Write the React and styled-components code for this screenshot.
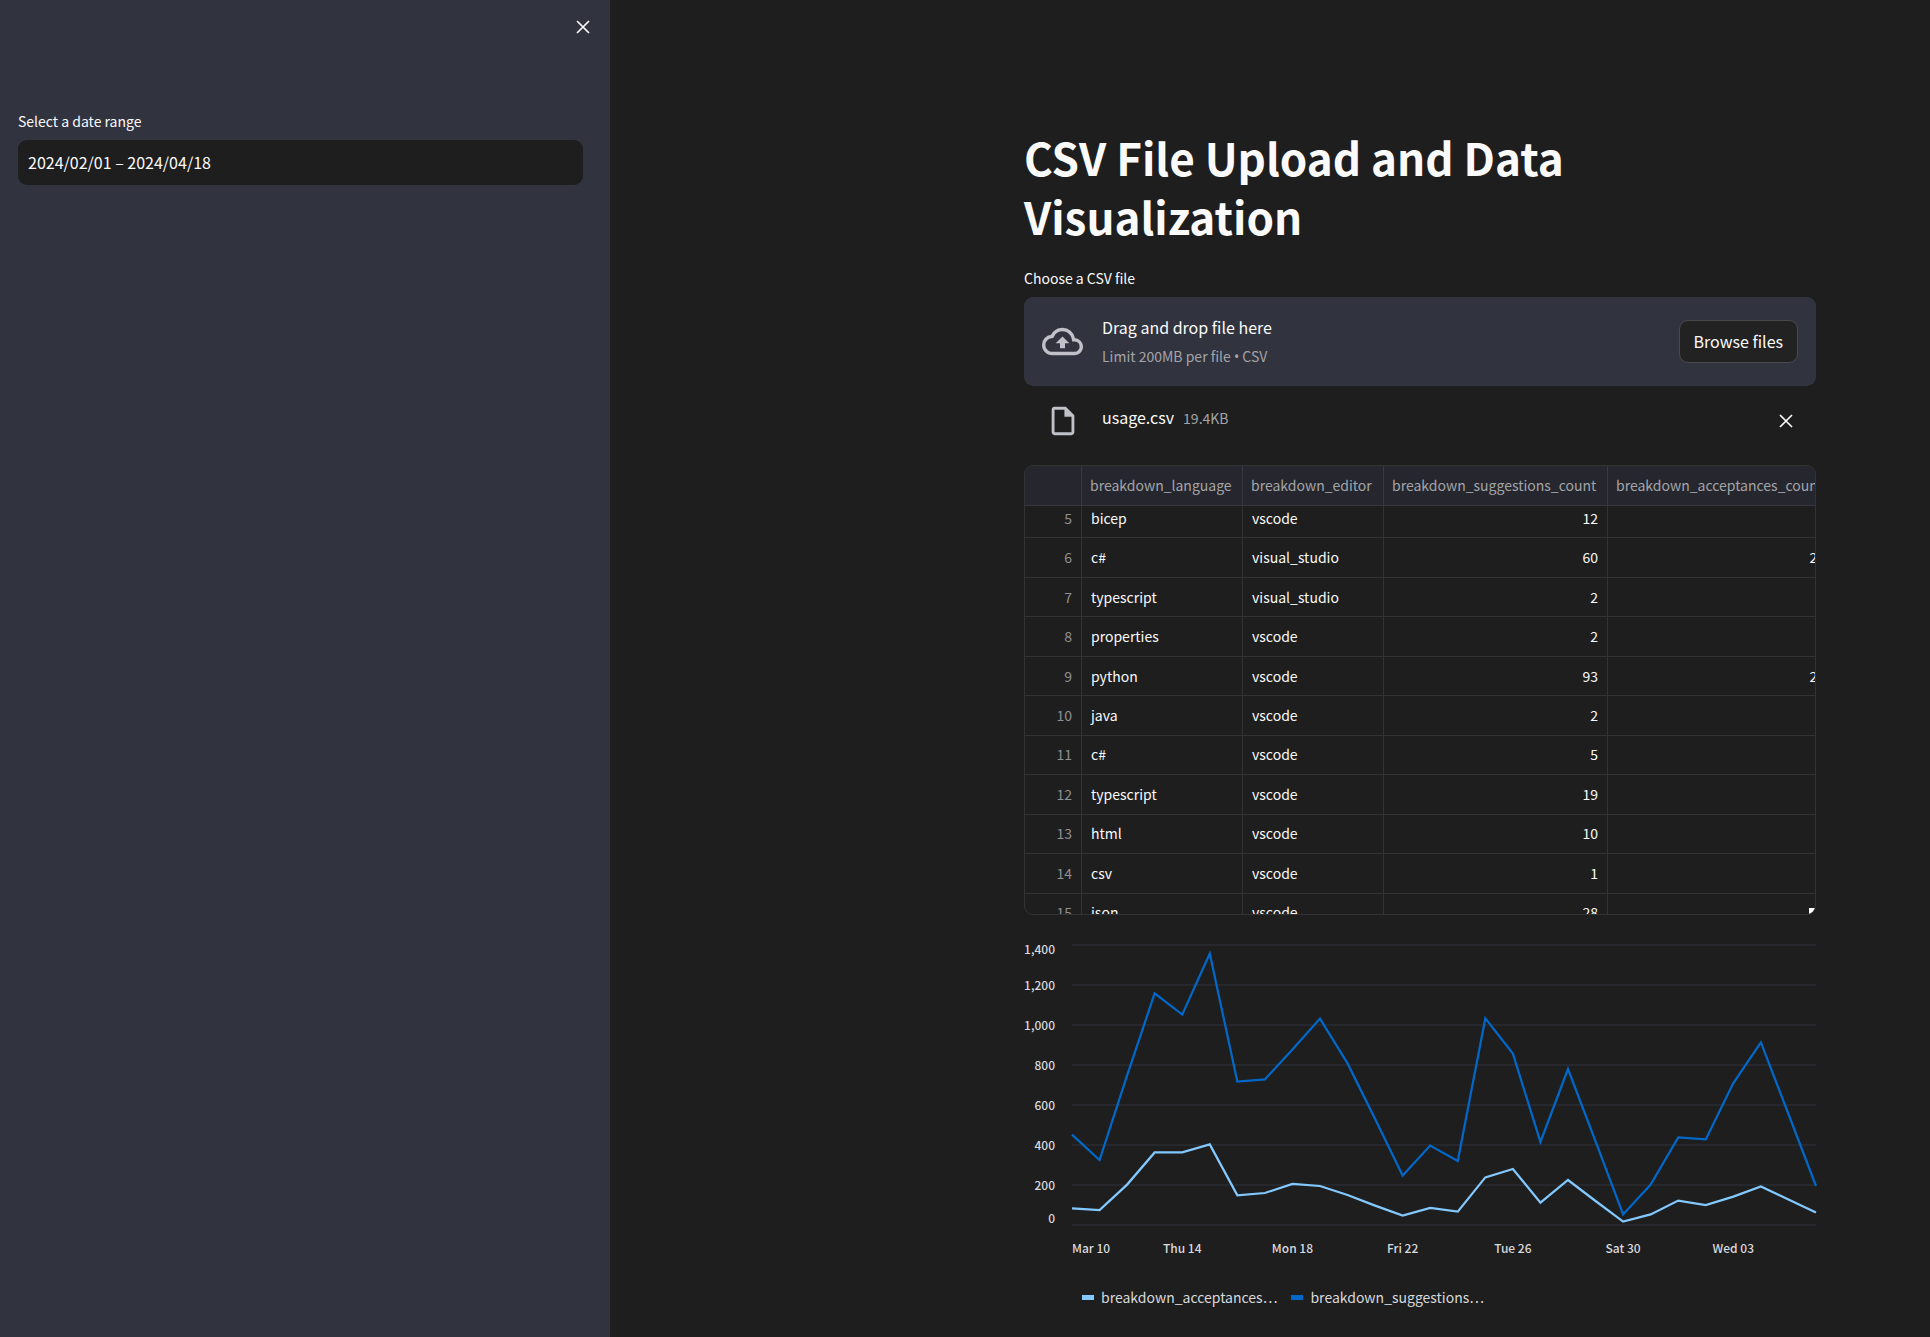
import React, { useLayoutEffect, useRef } from "react";
import styled, { createGlobalStyle } from "styled-components";

const GlobalStyle = createGlobalStyle`
  *, *::before, *::after { box-sizing: border-box; }
  body {
    margin: 0;
    background: #1e1e1e;
    color: #fafafa;
    font-family: "Noto Sans CJK SC", "Noto Sans", sans-serif;
    font-size: 16px;
    line-height: 24px;
  }
`;

const Page = styled.div`
  display: flex;
  min-height: 100vh;
`;

const Sidebar = styled.aside`
  flex: 0 0 610px;
  padding: 12px 27px 24px 18px;
  background: #31333f;
`;

const SidebarTop = styled.div`
  display: flex;
  justify-content: flex-end;
  height: 97px;
  margin-right: -15px;
`;

const IconButton = styled.button`
  display: flex;
  align-items: center;
  justify-content: center;
  width: 30px;
  height: 30px;
  padding: 0;
  border: 0;
  background: none;
  color: #fafafa;
  cursor: pointer;
`;

const Label = styled.label`
  display: block;
  margin-bottom: 7px;
  font-size: 14px;
  line-height: 24px;
`;

const DateInput = styled.input`
  display: block;
  width: 100%;
  height: 45px;
  padding: 0 10px 2px;
  border: 0;
  border-radius: 9px;
  background: #1e1e1e;
  color: #fafafa;
  font: inherit;
  outline: none;
`;

const Main = styled.main`
  flex: 1;
  min-width: 0;
  padding: 128px 0 24px 300px;
  display: flex;
  justify-content: center;
`;

const Content = styled.div`
  width: 100%;
  max-width: 792px;
`;

const Title = styled.h1`
  margin: 0 0 20px;
  font-size: 44px;
  font-weight: 700;
  line-height: 59px;
`;

const Dropzone = styled.section`
  display: flex;
  align-items: center;
  height: 89px;
  padding: 0 18px;
  border-radius: 9px;
  background: #31333f;
`;

const IconSlot = styled.span`
  display: flex;
  justify-content: center;
  width: 41px;
  margin-right: 19px;
  color: #c0c1c9;
`;

const DropText = styled.div`
  flex: 1;
  display: flex;
  flex-direction: column;
  gap: 5px;
`;

const Muted = styled.small`
  color: #a3a4a9;
  font-size: 14px;
`;

const Bullet = styled.span`
  font-family: "Noto Sans", sans-serif;
`;

const BrowseButton = styled.button`
  height: 43px;
  padding: 0 14px 2px;
  border: 1px solid #4a4a4c;
  border-radius: 9px;
  background: #222222;
  color: #fafafa;
  font: inherit;
  cursor: pointer;
`;

const FileRow = styled.div`
  display: flex;
  align-items: center;
  height: 70px;
  margin-bottom: 9px;
  padding: 0 15px 0 18px;
`;

const FileName = styled.div`
  flex: 1;
  display: flex;
  align-items: baseline;
  gap: 9px;
  padding-bottom: 7px;
`;

const GridFrame = styled.div`
  position: relative;
  overflow: hidden;
  border: 1px solid #333336;
  border-radius: 9px;
`;

const GridScroller = styled.div`
  height: 448px;
  overflow: hidden;
`;

const ScrollCorner = styled.span`
  position: absolute;
  right: 0;
  bottom: 0;
  width: 6px;
  height: 6px;
  background: #ffffff;
`;

const Grid = styled.table`
  width: 810px;
  height: 474px;
  table-layout: fixed;
  border-collapse: separate;
  border-spacing: 0;
  font-size: 14px;
  line-height: 20px;
`;

const HeadCell = styled.th`
  position: sticky;
  top: 0;
  height: 40px;
  padding: 0 8px 2px;
  border-right: 1px solid #38393e;
  border-bottom: 1px solid #38393e;
  background: #26272e;
  color: #a3a4a8;
  font-weight: 400;
  text-align: left;
  white-space: nowrap;
`;

const Cell = styled.td`
  padding: 0 9px 1px;
  border-right: 1px solid #333336;
  border-bottom: 1px solid #333336;
  color: ${(p) => (p.$muted ? "#8f9093" : "#fafafa")};
  text-align: ${(p) => (p.$right ? "right" : "left")};
`;

const ChartSvg = styled.svg`
  display: block;
  width: 100%;
  height: auto;
  margin-top: 20px;
  overflow: visible;
`;

const AxisText = styled.text`
  fill: #d8d9dd;
  font-size: 12px;
  font-weight: 500;
`;

const Legend = styled.ul`
  display: flex;
  gap: 14px;
  margin: 20px 0 0;
  padding: 0 0 0 58px;
  list-style: none;
  color: #d8d9dd;
  font-size: 14px;
`;

const LegendItem = styled.li`
  display: flex;
  align-items: center;
  gap: 7px;

  &::before {
    content: "";
    width: 12px;
    height: 5px;
    background: ${(p) => p.$color};
  }
`;

const columns = [
  { name: "", width: 57 },
  { name: "breakdown_language", width: 161 },
  { name: "breakdown_editor", width: 141 },
  { name: "breakdown_suggestions_count", width: 224 },
  { name: "breakdown_acceptances_count", width: 227 },
];

const rows = [
  [5, "bicep", "vscode", 12, ""],
  [6, "c#", "visual_studio", 60, 20],
  [7, "typescript", "visual_studio", 2, ""],
  [8, "properties", "vscode", 2, ""],
  [9, "python", "vscode", 93, 20],
  [10, "java", "vscode", 2, ""],
  [11, "c#", "vscode", 5, ""],
  [12, "typescript", "vscode", 19, ""],
  [13, "html", "vscode", 10, ""],
  [14, "csv", "vscode", 1, ""],
  [15, "json", "vscode", 28, ""],
];

const suggestions = [
  452, 325, 748, 1158, 1052, 1357, 717, 728, 878, 1032, 808, 530, 247, 397, 320,
  1033, 857, 415, 780, 418, 53, 202, 438, 428, 710, 913, 555, 195,
];
const acceptances = [
  83, 75, 202, 363, 363, 403, 148, 160, 205, 195, 150, 97, 47, 85, 67, 238, 280,
  112, 225, 120, 17, 53, 122, 100, 142, 193, 128, 63,
];

const LIGHT = "#83c9ff";
const BLUE = "#0068c9";

const plot = { left: 48, right: 792, top: 10, bottom: 290 };
const xAt = (day) => plot.left + ((plot.right - plot.left) * day) / 27;
const yAt = (value) => plot.bottom - ((plot.bottom - plot.top) * value) / 1400;
const toPoints = (series) => series.map((v, i) => `${xAt(i)},${yAt(v)}`).join(" ");

const yTicks = [0, 200, 400, 600, 800, 1000, 1200, 1400];
const xTicks = [
  [0, "Mar 10"],
  [4, "Thu 14"],
  [8, "Mon 18"],
  [12, "Fri 22"],
  [16, "Tue 26"],
  [20, "Sat 30"],
  [24, "Wed 03"],
];

// The first and last labels are pulled inside the plot's height.
const yLabelAt = (value) => {
  if (value === 0) return yAt(0) - 2;
  if (value === 1400) return yAt(1400) + 9;
  return yAt(value) + 5;
};

function CloseIcon() {
  return (
    <svg width="14" height="14" viewBox="0 0 14 14" fill="none" stroke="currentColor" strokeWidth="1.7" aria-hidden="true">
      <path d="M1 1l12 12M13 1L1 13" />
    </svg>
  );
}

function CloudUploadIcon() {
  return (
    <svg width="41" height="41" viewBox="0 0 24 24" fill="currentColor" aria-hidden="true">
      <path d="M19.35 10.04A7.49 7.49 0 0 0 12 4C9.11 4 6.6 5.64 5.35 8.04A5.994 5.994 0 0 0 0 14c0 3.31 2.69 6 6 6h13c2.76 0 5-2.24 5-5 0-2.64-2.05-4.78-4.65-4.96zM19 18H6c-2.21 0-4-1.79-4-4 0-2.05 1.53-3.76 3.56-3.97l1.07-.11.5-.95A5.469 5.469 0 0 1 12 6c2.62 0 4.88 1.86 5.39 4.43l.3 1.5 1.53.11A2.98 2.98 0 0 1 22 15c0 1.65-1.35 3-3 3zM8 13h2.55v3h2.9v-3H16l-4-4z" />
    </svg>
  );
}

function FileIcon() {
  return (
    <svg width="34" height="34" viewBox="0 0 24 24" fill="currentColor" aria-hidden="true">
      <path d="M6 2c-1.1 0-1.99.9-1.99 2L4 20c0 1.1.89 2 1.99 2H18c1.1 0 2-.9 2-2V8l-6-6H6zm0 18V4h7v5h5v11H6z" />
    </svg>
  );
}

function DataGrid() {
  const scroller = useRef(null);
  useLayoutEffect(() => {
    scroller.current.scrollTop = 7;
  }, []);

  return (
    <GridFrame>
      <GridScroller ref={scroller}>
        <Grid>
          <colgroup>
            {columns.map((c) => (
              <col key={c.name} style={{ width: c.width }} />
            ))}
          </colgroup>
          <thead>
            <tr>
              {columns.map((c) => (
                <HeadCell key={c.name} scope="col">{c.name}</HeadCell>
              ))}
            </tr>
          </thead>
          <tbody>
            {rows.map(([index, language, editor, suggested, accepted]) => (
              <tr key={index}>
                <Cell $muted $right>{index}</Cell>
                <Cell>{language}</Cell>
                <Cell>{editor}</Cell>
                <Cell $right>{suggested}</Cell>
                <Cell $right>{accepted}</Cell>
              </tr>
            ))}
          </tbody>
        </Grid>
      </GridScroller>
      <ScrollCorner />
    </GridFrame>
  );
}

function UsageChart() {
  return (
    <>
      <ChartSvg viewBox="0 0 792 330" role="img" aria-label="Suggestions and acceptances by day">
        {yTicks.map((v) => (
          <g key={v}>
            <line x1={plot.left} x2={plot.right} y1={yAt(v)} y2={yAt(v)} stroke="#31333f" />
            <AxisText x="31" y={yLabelAt(v)} textAnchor="end">{v.toLocaleString("en-US")}</AxisText>
          </g>
        ))}
        {xTicks.map(([day, text]) => (
          <AxisText key={text} x={xAt(day)} y="318" textAnchor={day === 0 ? "start" : "middle"}>{text}</AxisText>
        ))}
        <polyline points={toPoints(acceptances)} fill="none" stroke={LIGHT} strokeWidth="2.25" />
        <polyline points={toPoints(suggestions)} fill="none" stroke={BLUE} strokeWidth="2.25" />
      </ChartSvg>
      <Legend>
        <LegendItem $color={LIGHT}>breakdown_acceptances…</LegendItem>
        <LegendItem $color={BLUE}>breakdown_suggestions…</LegendItem>
      </Legend>
    </>
  );
}

export default function App() {
  return (
    <>
      <GlobalStyle />
      <Page>
        <Sidebar>
          <SidebarTop>
            <IconButton type="button" aria-label="Close sidebar"><CloseIcon /></IconButton>
          </SidebarTop>
          <Label htmlFor="range">Select a date range</Label>
          <DateInput id="range" type="text" defaultValue="2024/02/01 – 2024/04/18" />
        </Sidebar>
        <Main>
          <Content>
            <Title>CSV File Upload and Data Visualization</Title>
            <Label htmlFor="browse">Choose a CSV file</Label>
            <Dropzone>
              <IconSlot><CloudUploadIcon /></IconSlot>
              <DropText>
                <span>Drag and drop file here</span>
                <Muted>Limit 200MB per file <Bullet>•</Bullet> CSV</Muted>
              </DropText>
              <BrowseButton id="browse" type="button">Browse files</BrowseButton>
            </Dropzone>
            <FileRow>
              <IconSlot><FileIcon /></IconSlot>
              <FileName>
                <span>usage.csv</span>
                <Muted>19.4KB</Muted>
              </FileName>
              <IconButton type="button" aria-label="Remove file"><CloseIcon /></IconButton>
            </FileRow>
            <DataGrid />
            <UsageChart />
          </Content>
        </Main>
      </Page>
    </>
  );
}
